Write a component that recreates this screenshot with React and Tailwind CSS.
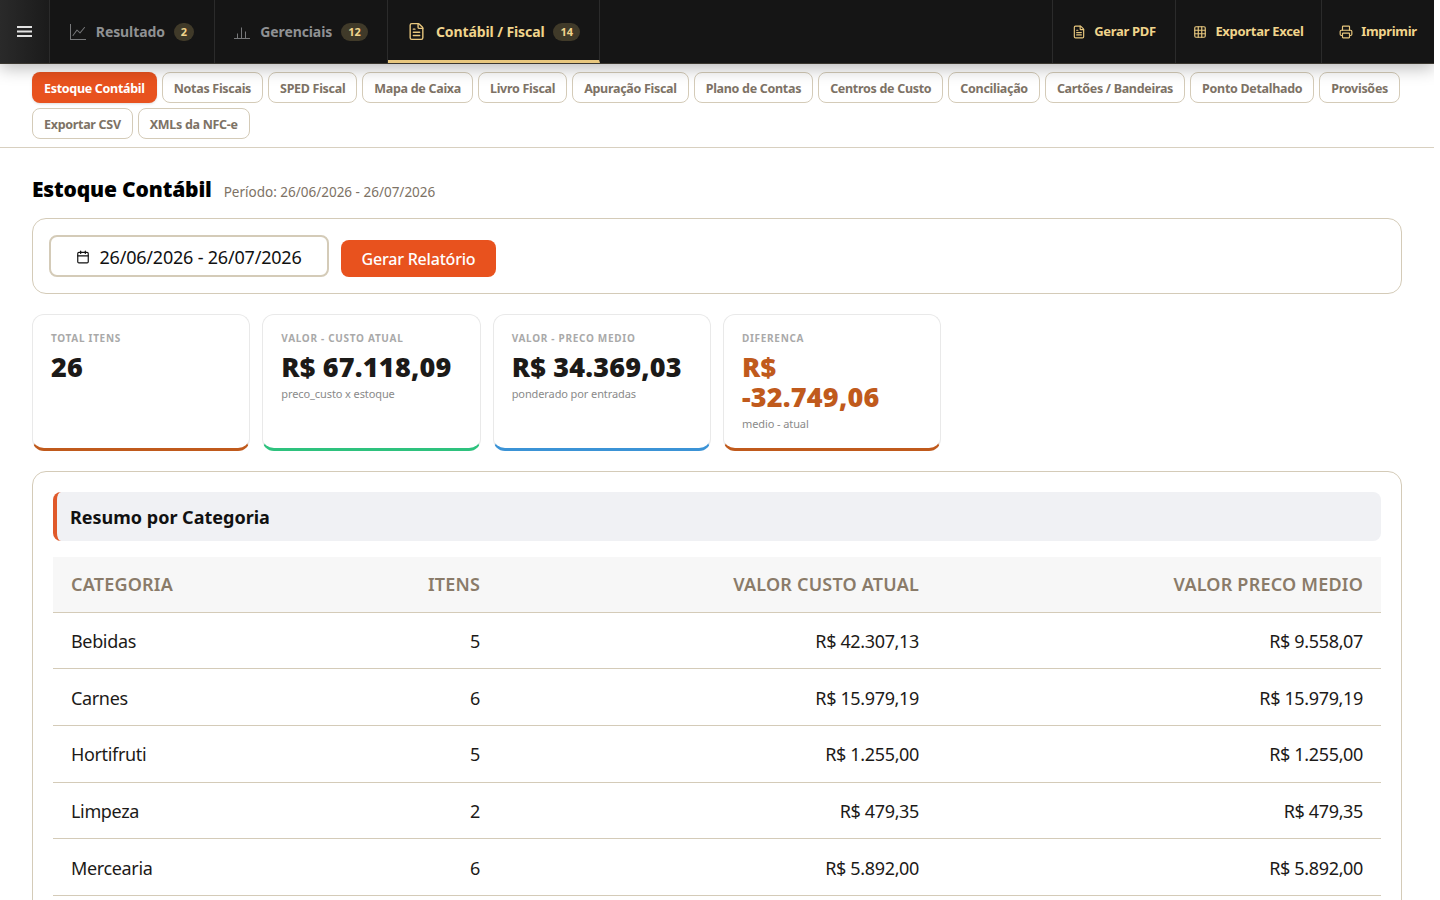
import React from 'react';
import { BsGraphUp } from 'react-icons/bs';
import { Calendar, FileText, Grid3x3, Printer } from 'lucide-react';

const font = "font-['Noto_Sans','Open_Sans',sans-serif]";

const subTabs = [
  'Estoque Contábil', 'Notas Fiscais', 'SPED Fiscal', 'Mapa de Caixa', 'Livro Fiscal', 'Apuração Fiscal', 'Plano de Contas',
  'Centros de Custo', 'Conciliação', 'Cartões / Bandeiras', 'Ponto Detalhado', 'Provisões', 'Exportar CSV', 'XMLs da NFC-e',
];

const rows = [
  ['Bebidas', '5', 'R$ 42.307,13', 'R$ 9.558,07'],
  ['Carnes', '6', 'R$ 15.979,19', 'R$ 15.979,19'],
  ['Hortifruti', '5', 'R$ 1.255,00', 'R$ 1.255,00'],
  ['Limpeza', '2', 'R$ 479,35', 'R$ 479,35'],
  ['Mercearia', '6', 'R$ 5.892,00', 'R$ 5.892,00'],
];

// bars over a baseline, no package has this exact one
const BarsIcon = ({ className }) => (
  <svg viewBox="0 0 16 16" fill="none" stroke="currentColor" strokeWidth="1" className={className}>
    <path d="M0 14.5h16M3.5 14.5V9.5M7.5 14.5V3.5M11.5 14.5V7.5" />
  </svg>
);

const DocIcon = ({ className }) => <FileText className={className} strokeWidth={1.75} />;

const NavTab = ({ icon: Icon, label, count, active, width }) => (
  <div className={`flex items-center justify-center gap-2 h-full border-r border-[#2b2b2b] ${width} ${active ? 'border-b-[3px] border-b-[#e8c77e] pt-[3px]' : ''}`}>
    <Icon className={active ? 'w-[19px] h-[19px] text-[#e8c77e]' : 'w-4 h-4 text-[#77787a]'} />
    <span className={`ml-[2px] text-[14px] font-bold tracking-[-0.1px] ${active ? 'text-[#f0d48c]' : 'text-[#8f9193]'}`}>{label}</span>
    <span className="ml-[1px] rounded-full bg-[#403a29] text-[#f0d48c] text-[11px] font-bold px-[7px] h-[18px] leading-[18px]">{count}</span>
  </div>
);

const ActionBtn = ({ icon: Icon, label, width }) => (
  <div className={`flex items-center justify-center gap-2 h-full pt-[1px] border-l border-[#2b2b2b] ${width}`}>
    <Icon className="w-[14px] h-[14px] text-[#e8c77e]" strokeWidth={2} />
    <span className="text-[13px] font-bold tracking-[-0.3px] text-[#f0d48c]">{label}</span>
  </div>
);

const KpiCard = ({ label, value, note, border, color, valueWidth }) => (
  <div className={`h-[137px] bg-white rounded-xl border border-[#e9e9e9] border-b-[3px] px-[18px] pt-[16px] ${border}`}>
    <div className="text-[10px] font-bold tracking-[0.7px] uppercase text-[#a9a9a9]">{label}</div>
    <div className={`mt-[6px] text-[27px] leading-[30px] font-black tracking-[0.2px] ${color} ${valueWidth}`}>{value}</div>
    {note && <div className="mt-[4px] text-[11px] text-[#8a8a8a] tracking-[-0.1px]">{note}</div>}
  </div>
);

export default function App() {
  return (
    <div className={`w-[1434px] h-screen overflow-hidden bg-white ${font}`}>
      <header className="relative z-10 flex justify-between h-[64px] bg-[#151515] border-b border-[#3a3730] shadow-[0_4px_16px_rgba(0,0,0,0.28)]">
        <div className="flex h-full">
          <div className="flex items-center justify-center w-[50px] h-full bg-gradient-to-r from-[#2a2a2a] to-[#1b1b1b] border-r border-[#2b2b2b]">
            <svg width="15" height="13" viewBox="0 0 15 13" fill="none" stroke="#e2e2e2" strokeWidth="2">
              <path d="M0 2h15M0 6.5h15M0 11h15" />
            </svg>
          </div>
          <NavTab icon={BsGraphUp} label="Resultado" count="2" width="w-[165px]" />
          <NavTab icon={BarsIcon} label="Gerenciais" count="12" width="w-[173px]" />
          <NavTab icon={DocIcon} label="Contábil / Fiscal" count="14" width="w-[212px]" active />
        </div>
        <div className="flex h-full">
          <ActionBtn icon={FileText} label="Gerar PDF" width="w-[123px]" />
          <ActionBtn icon={Grid3x3} label="Exportar Excel" width="w-[146px]" />
          <ActionBtn icon={Printer} label="Imprimir" width="w-[113px]" />
        </div>
      </header>

      <nav className="flex flex-wrap gap-x-[5px] gap-y-[5px] px-8 pt-2 pb-2 border-b border-[#d8d0c0]">
        {subTabs.map((t, i) => (
          <div
            key={t}
            className={i === 0
              ? 'h-[31px] pt-[3px] px-3 flex items-center rounded-lg bg-[#e8521e] text-white text-[12.5px] font-bold tracking-[-0.3px] shadow-sm'
              : 'h-[31px] pt-[3px] px-[11px] flex items-center rounded-lg border border-[#d4cbb8] text-[#7d7265] text-[12.5px] font-bold tracking-[-0.3px]'}
          >
            {t}
          </div>
        ))}
      </nav>

      <main className="px-8 pt-[26px]">
        <div className="flex items-baseline gap-3 h-[44px]">
          <h1 className="text-[21px] font-black text-black tracking-[-0.17px]">Estoque Contábil</h1>
          <span className="text-[13.5px] text-[#7d7265]">Período: 26/06/2026 - 26/07/2026</span>
        </div>

        <div className="flex items-center gap-3 h-[76px] px-[16px] rounded-[14px] border border-[#d4cbb8]">
          <div className="flex items-center justify-center gap-2 w-[280px] h-[42px] pt-[2px] rounded-lg border-2 border-[#d4cbb8] text-[18px] tracking-[-0.2px] text-[#111]">
            <Calendar className="w-[14px] h-[14px] mr-[1px]" strokeWidth={2} />
            26/06/2026 - 26/07/2026
          </div>
          <div className="flex items-center justify-center w-[155px] h-[37px] mt-[5px] rounded-lg bg-[#e8521e] text-white text-[16px] font-medium tracking-[-0.2px]">
            Gerar Relatório
          </div>
        </div>

        <div className="grid grid-cols-6 gap-3 mt-5">
          <KpiCard label="Total Itens" value="26" border="border-b-[#c05a1c]" color="text-[#1c1a18]" />
          <KpiCard label="Valor - Custo Atual" value="R$ 67.118,09" note="preco_custo x estoque" border="border-b-[#2ec27e]" color="text-[#1c1a18]" />
          <KpiCard label="Valor - Preco Medio" value="R$ 34.369,03" note="ponderado por entradas" border="border-b-[#3b93d6]" color="text-[#1c1a18]" />
          <KpiCard label="Diferenca" value="R$ -32.749,06" note="medio - atual" border="border-b-[#c05a1c]" color="text-[#c05a1c]" valueWidth="max-w-[160px]" />
        </div>

        <section className="mt-5 rounded-[14px] border border-[#d4cbb8] p-5">
          <h2 className="flex items-center h-[49px] pl-[13px] pt-[2px] rounded-lg border-l-4 border-[#e0592a] bg-[#f0f1f4] text-[18px] font-bold text-[#111]">
            Resumo por Categoria
          </h2>
          <table className="w-full mt-4 table-fixed border-collapse text-[18px] tracking-[-0.35px]">
            <colgroup>
              <col className="w-[300px]" />
              <col className="w-[145px]" />
              <col className="w-[439px]" />
              <col />
            </colgroup>
            <thead>
              <tr className="h-[55px] bg-[#f7f7f7] border-b border-[#d4cbb8] text-[#8a7b69] tracking-[0.2px]">
                <th className="px-[18px] text-left font-semibold">CATEGORIA</th>
                <th className="px-[18px] text-right font-semibold">ITENS</th>
                <th className="px-[18px] text-right font-semibold">VALOR CUSTO ATUAL</th>
                <th className="px-[18px] text-right font-semibold">VALOR PRECO MEDIO</th>
              </tr>
            </thead>
            <tbody>
              {rows.map((r) => (
                <tr key={r[0]} className="h-[56.7px] border-b border-[#d4cbb8] text-[#1c1a18]">
                  <td className="px-[18px] pt-[2px]">{r[0]}</td>
                  <td className="px-[18px] pt-[2px] text-right">{r[1]}</td>
                  <td className="px-[18px] pt-[2px] text-right">{r[2]}</td>
                  <td className="px-[18px] pt-[2px] text-right">{r[3]}</td>
                </tr>
              ))}
            </tbody>
          </table>
        </section>
      </main>
    </div>
  );
}
